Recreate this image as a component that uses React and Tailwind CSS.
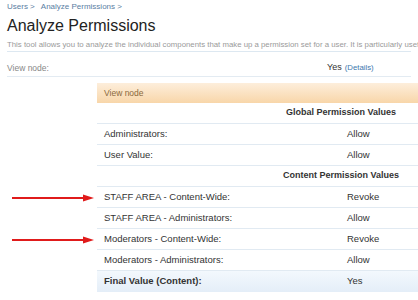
import React from "react";

const rows = [
  { type: "head", label: "Global Permission Values" },
  { label: "Administrators:", value: "Allow" },
  { label: "User Value:", value: "Allow" },
  { type: "head", label: "Content Permission Values" },
  { label: "STAFF AREA - Content-Wide:", value: "Revoke", arrow: true },
  { label: "STAFF AREA - Administrators:", value: "Allow" },
  { label: "Moderators - Content-Wide:", value: "Revoke", arrow: true },
  { label: "Moderators - Administrators:", value: "Allow" },
];

function Arrow() {
  return (
    <svg width="84" height="10" viewBox="0 0 84 10" className="block">
      <line x1="1" y1="5" x2="74" y2="5" stroke="#e01b1b" strokeWidth="2" />
      <polygon points="72,1.5 83,5 72,8.5" fill="#e01b1b" />
    </svg>
  );
}

function Row({ row }) {
  return (
    <div className="flex h-[21px]">
      <div className="w-[97px] shrink-0 flex items-center pl-[11px]">
        {row.arrow && <Arrow />}
      </div>
      <div className="w-[488px] shrink-0 flex items-center border-b border-[#e1eaf2]">
        {row.type === "head" ? (
          <div className="w-full text-center font-bold text-[9px] text-[#333]">
            {row.label}
          </div>
        ) : (
          <>
            <div className="w-[243px] pl-[7px] text-[9.5px] text-[#333]">{row.label}</div>
            <div className="pl-[7px] text-[9.5px] text-[#333]">{row.value}</div>
          </>
        )}
      </div>
    </div>
  );
}

export default function App() {
  return (
    <div className="w-[418px] h-[300px] overflow-hidden bg-white font-['Liberation_Sans',Arial,sans-serif]">
      <div className="px-[7px]">
        <div className="h-[14px] flex items-center gap-[6px] text-[8px] text-[#5a7ea3] whitespace-nowrap">
          <span>Users &gt;</span>
          <span>Analyze Permissions &gt;</span>
        </div>
        <h1 className="h-[24px] leading-[24px] text-[16px] text-[#222] whitespace-nowrap">
          Analyze Permissions
        </h1>
        <div className="h-[14px] flex items-center text-[7.8px] text-[#9a9a9a] whitespace-nowrap border-b border-[#dde8f1]">
          This tool allows you to analyze the individual components that make up a permission set for a user. It is particularly useful
        </div>
        <div className="h-[25px] pt-[8px] flex items-center border-b border-[#e3ebf2]">
          <div className="w-[320px] text-[8.5px] text-[#888]">View node:</div>
          <div className="flex items-baseline gap-[3px] whitespace-nowrap">
            <span className="text-[9px] text-[#333]">Yes</span>
            <span className="text-[7.8px] text-[#3d78ae]">(Details)</span>
          </div>
        </div>
      </div>
      <div className="mt-[6px] flex">
        <div className="w-[97px] shrink-0" />
        <div className="w-[488px] shrink-0 h-[20px] flex items-center pl-[7px] text-[8.5px] text-[#8b6a3c] bg-gradient-to-b from-[#fdeedb] to-[#f8d6a9]">
          View node
        </div>
      </div>
      {rows.map((row, i) => (
        <Row key={i} row={row} />
      ))}
      <div className="flex h-[21px]">
        <div className="w-[97px] shrink-0" />
        <div className="w-[488px] shrink-0 flex items-center bg-gradient-to-b from-[#f3f8fd] to-[#e4eef8]">
          <div className="w-[243px] pl-[7px] text-[9.5px] font-bold text-[#333]">Final Value (Content):</div>
          <div className="pl-[7px] text-[9.5px] text-[#333]">Yes</div>
        </div>
      </div>
    </div>
  );
}
